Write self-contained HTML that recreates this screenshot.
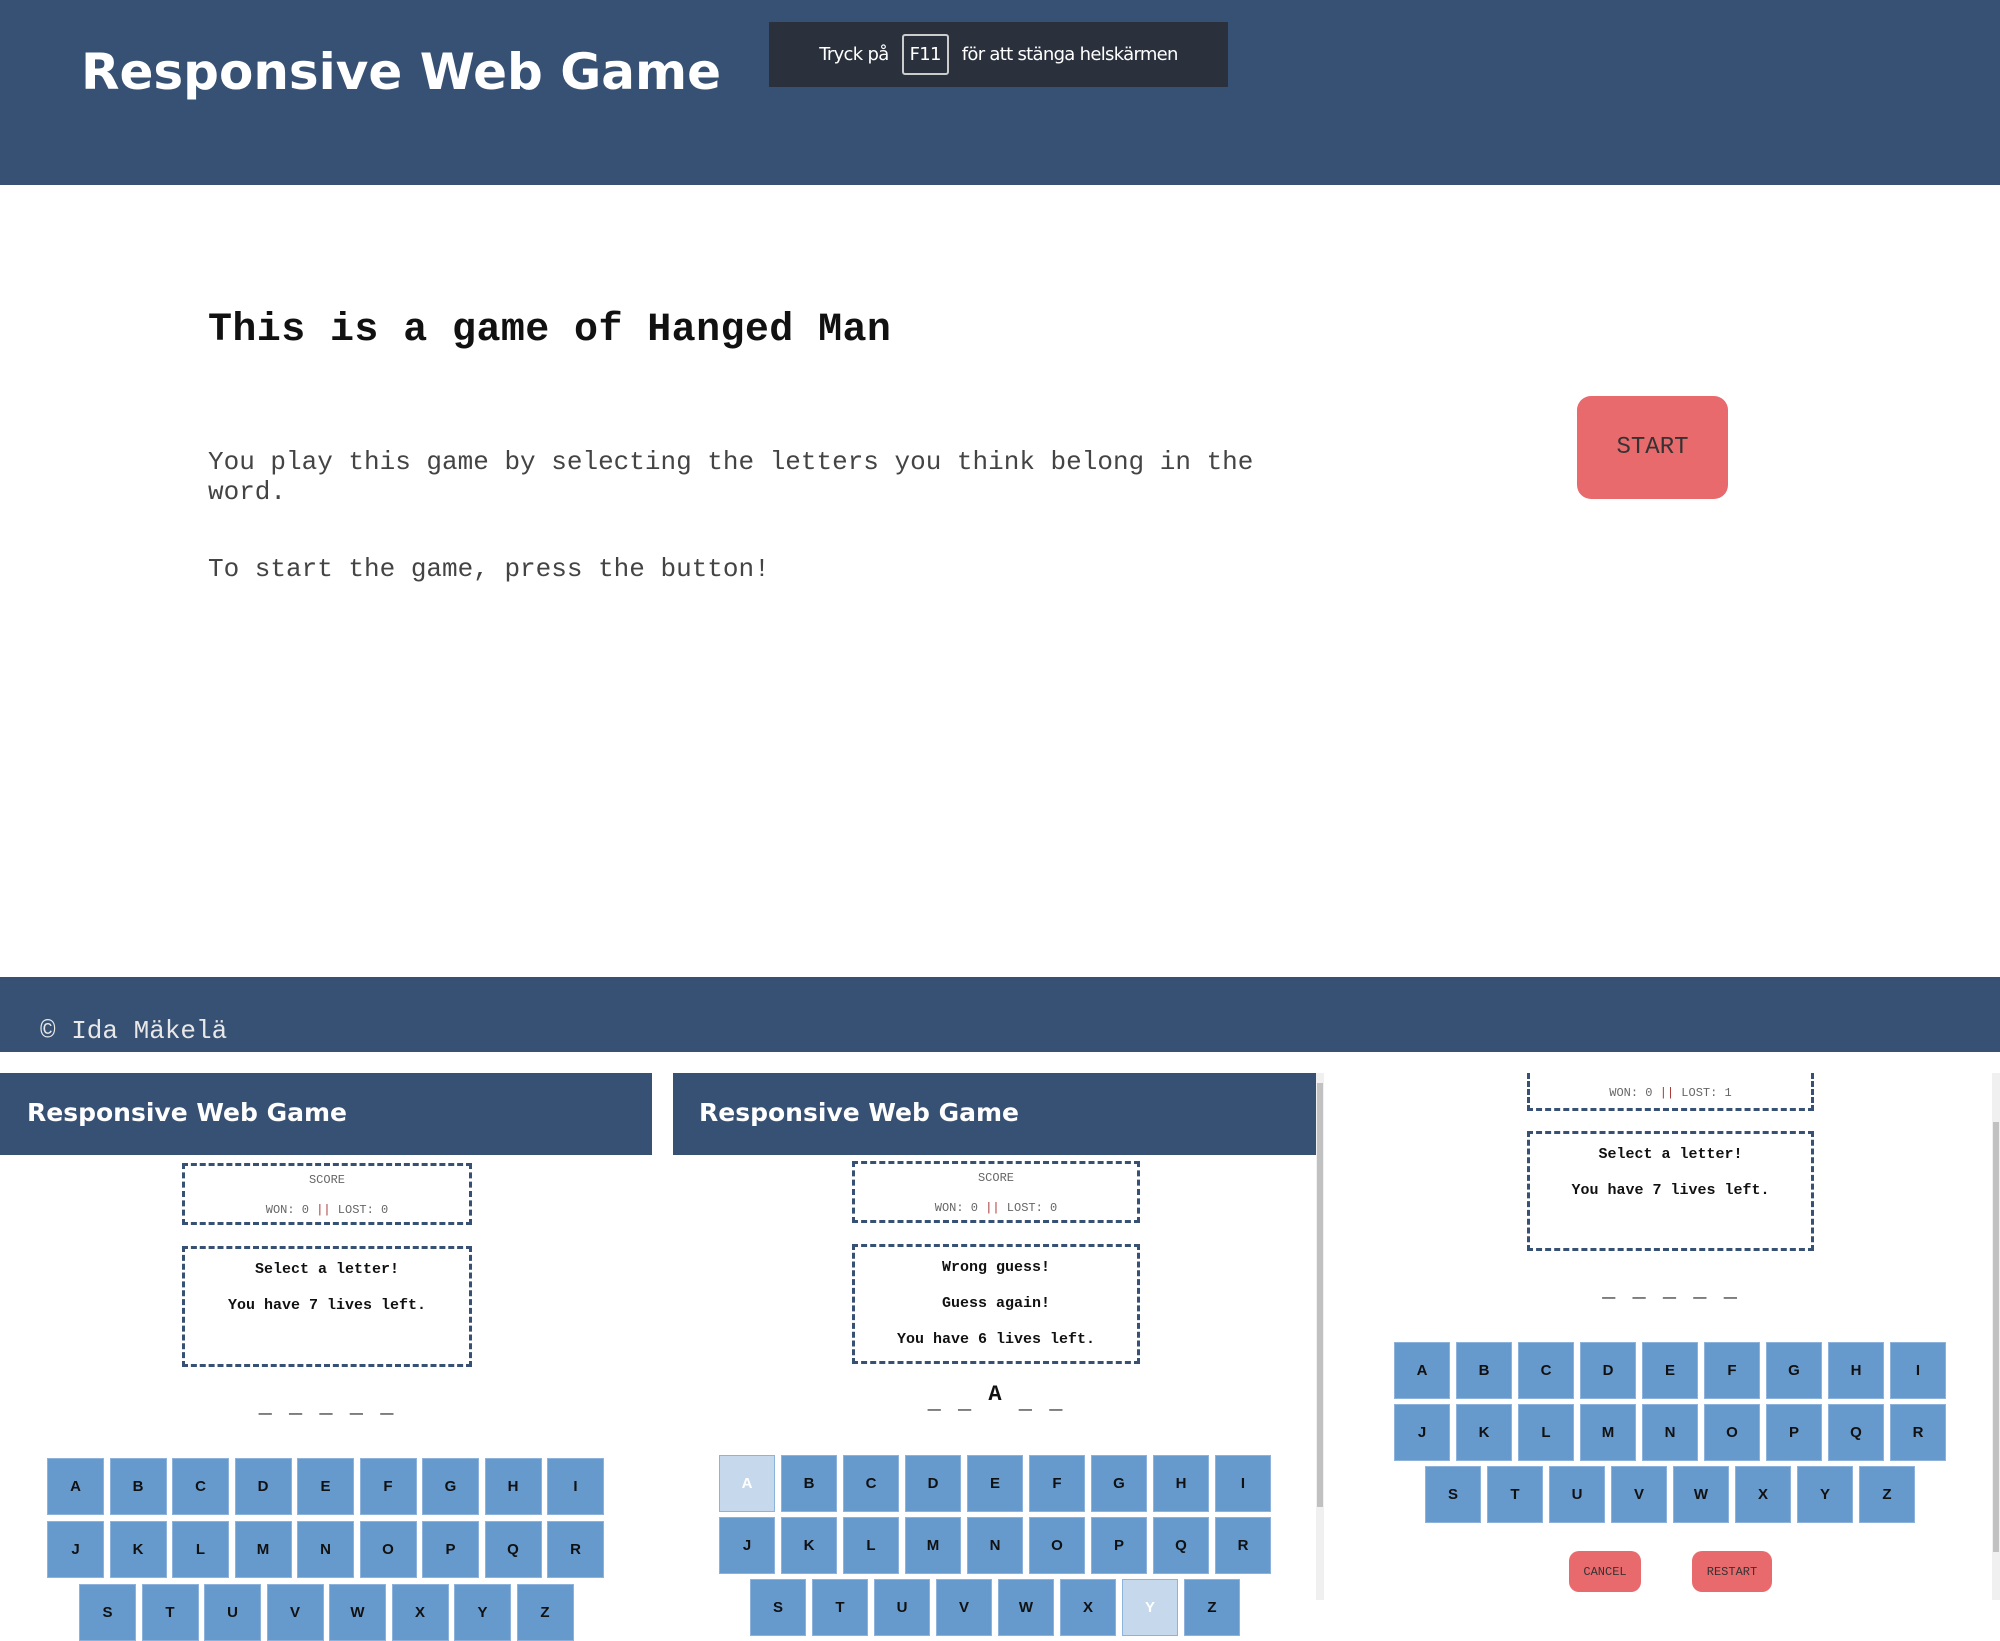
<!DOCTYPE html>
<html><head><meta charset="utf-8">
<style>
*{margin:0;padding:0;box-sizing:border-box}
body{width:2000px;height:1600px;overflow:hidden;background:#fff;position:relative;font-family:"Liberation Mono",monospace}
.abs{position:absolute}
.hdr{background:#365173}
.title{font-family:"DejaVu Sans","Liberation Sans",sans-serif;font-weight:bold;color:#fff;white-space:nowrap}
.box{position:absolute;border:3px dashed #365173;text-align:center}
.c{position:absolute;left:0;right:0;text-align:center;white-space:nowrap}
.sc{font-size:12px;color:#666}
.msg{font-size:15px;font-weight:bold;color:#111}
.row{position:absolute;display:flex}
.k{width:57px;height:57px;background:#6699cc;margin-right:5.5px;display:flex;align-items:center;justify-content:center;font-family:"Liberation Sans",sans-serif;font-weight:bold;font-size:15px;color:#111;border:1px solid #8db3dc}
.p2 .k,.p3 .k{width:56px;margin-right:6px}
.k.f{background:#c6d9ec;color:#fff}
.word{font-size:22px;font-weight:bold;color:#111;letter-spacing:2px}
.btn{position:absolute;background:#e86a6c;border-radius:10px;display:flex;align-items:center;justify-content:center;color:#333;font-family:"Liberation Mono",monospace}
</style></head><body>

<div class="abs hdr" style="left:0;top:0;width:2000px;height:185px"></div>
<div class="abs title" style="left:81px;top:43px;font-size:50px">Responsive Web Game</div>
<div class="abs" style="left:769px;top:22px;width:459px;height:65px;background:#2b313c;color:#fff;font-family:'DejaVu Sans',sans-serif;font-size:18px;display:flex;align-items:center;justify-content:center;letter-spacing:-0.7px">Tryck på&nbsp;<span style="border:2px solid #ccc;border-radius:3px;padding:8px 6px;margin:0 8px">F11</span>&nbsp;för att stänga helskärmen</div>

<div class="abs" style="left:208px;top:308px;font-size:40px;font-weight:bold;color:#111;white-space:nowrap;letter-spacing:0.4px">This is a game of Hanged Man</div>
<div class="abs" style="left:208px;top:447px;font-size:26px;line-height:30px;color:#444;width:1100px">You play this game by selecting the letters you think belong in the<br>word.</div>
<div class="abs" style="left:208px;top:554px;font-size:26px;line-height:30px;color:#444;white-space:nowrap">To start the game, press the button!</div>
<div class="btn" style="left:1577px;top:396px;width:151px;height:103px;border-radius:14px;font-size:24px">START</div>

<div class="abs hdr" style="left:0;top:977px;width:2000px;height:75px"></div>
<div class="abs" style="left:40px;top:1016px;font-size:26px;color:#e8e8e8;white-space:nowrap">© Ida Mäkelä</div>

<!-- Panel 1 -->
<div class="abs hdr" style="left:0;top:1073px;width:652px;height:82px"></div>
<div class="abs title" style="left:27px;top:1098px;font-size:25px">Responsive Web Game</div>
<div class="box" style="left:182px;top:1163px;width:290px;height:62px"><div class="c sc" style="top:7px">SCORE</div><div class="c sc" style="top:37px">WON: 0 <span style="color:#a33">||</span> LOST: 0</div></div>
<div class="box" style="left:182px;top:1246px;width:290px;height:121px"><div class="c msg" style="top:12px">Select a letter!</div><div class="c msg" style="top:48px">You have 7 lives left.</div></div>
<div class="c word" style="left:182px;width:290px;right:auto;top:1394px">_ _ _ _ _</div>
<div class="row" style="left:47px;top:1458px"><div class="k">A</div><div class="k">B</div><div class="k">C</div><div class="k">D</div><div class="k">E</div><div class="k">F</div><div class="k">G</div><div class="k">H</div><div class="k">I</div></div>
<div class="row" style="left:47px;top:1521px"><div class="k">J</div><div class="k">K</div><div class="k">L</div><div class="k">M</div><div class="k">N</div><div class="k">O</div><div class="k">P</div><div class="k">Q</div><div class="k">R</div></div>
<div class="row" style="left:79px;top:1584px"><div class="k">S</div><div class="k">T</div><div class="k">U</div><div class="k">V</div><div class="k">W</div><div class="k">X</div><div class="k">Y</div><div class="k">Z</div></div>

<!-- Panel 2 -->
<div class="p2">
<div class="abs hdr" style="left:673px;top:1073px;width:643px;height:82px"></div>
<div class="abs title" style="left:699px;top:1098px;font-size:25px">Responsive Web Game</div>
<div class="abs" style="left:1316px;top:1073px;width:8px;height:527px;background:#f0f0f0"></div>
<div class="abs" style="left:1317px;top:1083px;width:6px;height:424px;background:#c1c1c1"></div>
<div class="box" style="left:852px;top:1161px;width:288px;height:62px"><div class="c sc" style="top:7px">SCORE</div><div class="c sc" style="top:37px">WON: 0 <span style="color:#a33">||</span> LOST: 0</div></div>
<div class="box" style="left:852px;top:1244px;width:288px;height:120px"><div class="c msg" style="top:12px">Wrong guess!</div><div class="c msg" style="top:48px">Guess again!</div><div class="c msg" style="top:84px">You have 6 lives left.</div></div>
<div class="c word" style="left:852px;width:288px;right:auto;top:1390px">_ _ <span style="position:relative;top:-8px">A</span> _ _</div>
<div class="row" style="left:719px;top:1455px"><div class="k f">A</div><div class="k">B</div><div class="k">C</div><div class="k">D</div><div class="k">E</div><div class="k">F</div><div class="k">G</div><div class="k">H</div><div class="k">I</div></div>
<div class="row" style="left:719px;top:1517px"><div class="k">J</div><div class="k">K</div><div class="k">L</div><div class="k">M</div><div class="k">N</div><div class="k">O</div><div class="k">P</div><div class="k">Q</div><div class="k">R</div></div>
<div class="row" style="left:750px;top:1579px"><div class="k">S</div><div class="k">T</div><div class="k">U</div><div class="k">V</div><div class="k">W</div><div class="k">X</div><div class="k f">Y</div><div class="k">Z</div></div>
</div>

<!-- Panel 3 -->
<div class="p3">
<div class="abs" style="left:1992px;top:1073px;width:8px;height:527px;background:#f0f0f0"></div>
<div class="abs" style="left:1993px;top:1122px;width:6px;height:430px;background:#c1c1c1"></div>
<div class="box" style="left:1527px;top:1073px;width:287px;height:38px;border-top:none"><div class="c sc" style="top:13px">WON: 0 <span style="color:#a33">||</span> LOST: 1</div></div>
<div class="box" style="left:1527px;top:1131px;width:287px;height:120px"><div class="c msg" style="top:12px">Select a letter!</div><div class="c msg" style="top:48px">You have 7 lives left.</div></div>
<div class="c word" style="left:1527px;width:287px;right:auto;top:1278px">_ _ _ _ _</div>
<div class="row" style="left:1394px;top:1342px"><div class="k">A</div><div class="k">B</div><div class="k">C</div><div class="k">D</div><div class="k">E</div><div class="k">F</div><div class="k">G</div><div class="k">H</div><div class="k">I</div></div>
<div class="row" style="left:1394px;top:1404px"><div class="k">J</div><div class="k">K</div><div class="k">L</div><div class="k">M</div><div class="k">N</div><div class="k">O</div><div class="k">P</div><div class="k">Q</div><div class="k">R</div></div>
<div class="row" style="left:1425px;top:1466px"><div class="k">S</div><div class="k">T</div><div class="k">U</div><div class="k">V</div><div class="k">W</div><div class="k">X</div><div class="k">Y</div><div class="k">Z</div></div>
<div class="btn" style="left:1569px;top:1551px;width:72px;height:41px;font-size:12px">CANCEL</div>
<div class="btn" style="left:1692px;top:1551px;width:80px;height:41px;font-size:12px">RESTART</div>
</div>

</body></html>
